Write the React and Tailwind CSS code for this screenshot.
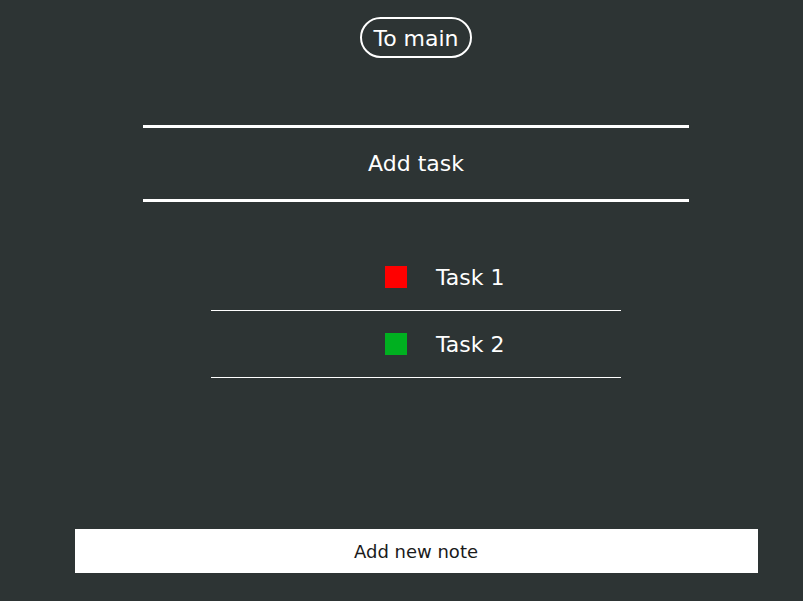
export default function App() {
  return (
    <div className="min-h-[601px] w-full bg-[#2d3434] pl-[29px] text-white" style={{ fontFamily: '"DejaVu Sans", Verdana, sans-serif' }}>
      <div className="flex flex-col items-center">
        <button className="mt-[17px] flex h-[41px] w-[112px] items-center justify-center rounded-full border-2 border-white pt-[3px] text-[22px] leading-none text-white">
          To main
        </button>
        <div className="mt-[67px] flex h-[77px] w-[546px] items-center justify-center border-y-[3px] border-white pt-[1px] text-[22px] leading-none">
          Add task
        </div>
        <div className="mt-[42px] flex w-[410px] flex-col">
          <div className="flex h-[67px] items-center border-b border-white pl-[174px]">
            <div className="h-[22px] w-[22px] bg-[#ff0000]" />
            <span className="ml-[29px] pt-[2px] text-[22px] leading-none">Task 1</span>
          </div>
          <div className="flex h-[67px] items-center border-b border-white pl-[174px]">
            <div className="h-[22px] w-[22px] bg-[#00b020]" />
            <span className="ml-[29px] pt-[2px] text-[22px] leading-none">Task 2</span>
          </div>
        </div>
        <button className="mt-[151px] flex h-[44px] w-[683px] items-center justify-center bg-white pt-[2px] text-[18px] leading-none text-[#1a1a1a]">
          Add new note
        </button>
      </div>
    </div>
  );
}
